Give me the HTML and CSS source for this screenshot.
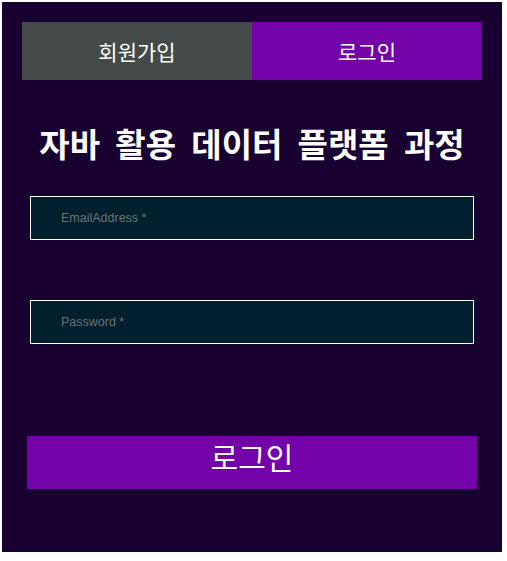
FILE: index.html
```html
<!DOCTYPE html>
<html lang="ko">
<head>
<meta charset="utf-8">
<title>로그인</title>
<link rel="stylesheet" href="styles.css">
</head>
<body>
<div class="panel">
  <div class="tabs">
    <div class="tab tab-signup">회원가입</div>
    <div class="tab tab-login">로그인</div>
  </div>
  <h1 class="title">자바 활용 데이터 플랫폼 과정</h1>
  <input class="field field-email" type="text" placeholder="EmailAddress *">
  <input class="field field-password" type="password" placeholder="Password *">
  <button class="submit" type="button">로그인</button>
</div>
</body>
</html>
```
FILE: styles.css
```css
html, body {
  margin: 0;
  padding: 0;
  background: #ffffff;
}
body {
  font-family: "Noto Sans CJK KR", "Noto Sans", sans-serif;
}
.panel {
  margin: 2px;
  width: 500px;
  height: 550px;
  background: #180030;
  box-sizing: border-box;
  padding-top: 20px;
  display: flex;
  flex-direction: column;
  align-items: center;
}
.tabs {
  display: flex;
  width: 460px;
  height: 58px;
}
.tab {
  flex: 1;
  display: flex;
  align-items: center;
  justify-content: center;
  color: #ffffff;
  font-size: 21px;
}
.tab-signup { background: #434a47; }
.tab-login { background: #7303a8; }
.title {
  margin: 43px 0 0;
  color: #ffffff;
  font-size: 33px;
  font-weight: 700;
  line-height: 41px;
  word-spacing: 6px;
  text-align: center;
  white-space: nowrap;
}
.field {
  display: block;
  box-sizing: border-box;
  width: 444px;
  height: 44px;
  border: 1px solid #ffffff;
  background: #00202f;
  padding: 0 0 0 30px;
  font-family: "Liberation Sans", Arial, sans-serif;
  font-size: 12.5px;
  color: #ffffff;
  outline: none;
}
.field::placeholder {
  color: #6a7473;
}
.field-email { margin-top: 32px; }
.field-password { margin-top: 60px; }
.submit {
  margin-top: 92px;
  width: 450px;
  height: 53px;
  border: none;
  background: #7303a8;
  color: #ffffff;
  font-family: "Noto Sans CJK KR", "Noto Sans", sans-serif;
  font-size: 30px;
  line-height: 40px;
  padding: 0;
  display: flex;
  align-items: flex-start;
  justify-content: center;
}
```
